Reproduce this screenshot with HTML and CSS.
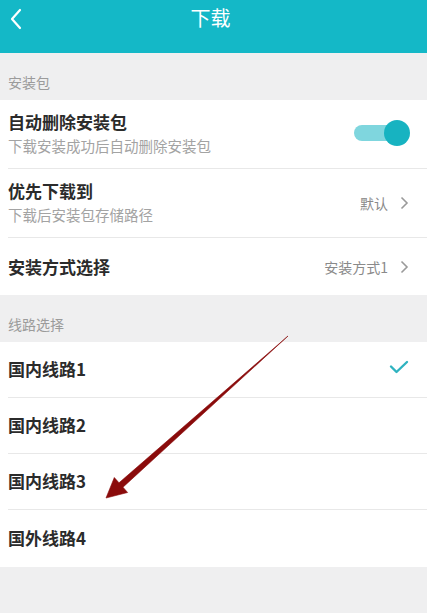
FILE: index.html
```html
<!DOCTYPE html>
<html lang="zh">
<head>
<meta charset="utf-8">
<link rel="stylesheet" href="styles.css">
</head>
<body>
<div class="page">
  <header class="topbar">
    <svg class="back" width="14" height="22" viewBox="0 0 14 22"><path d="M11 2 L3 11 L11 20" fill="none" stroke="#fff" stroke-width="2.2" stroke-linecap="round" stroke-linejoin="round"/></svg>
    <div class="title">下载</div>
  </header>

  <div class="section-label">安装包</div>
  <div class="group">
    <div class="row row-tall">
      <div class="texts">
        <div class="main">自动删除安装包</div>
        <div class="sub">下载安装成功后自动删除安装包</div>
      </div>
      <div class="toggle"><span class="track"></span><span class="knob"></span></div>
    </div>
    <div class="row row-tall">
      <div class="texts">
        <div class="main">优先下载到</div>
        <div class="sub">下载后安装包存储路径</div>
      </div>
      <div class="value">默认<svg class="chev" width="9" height="14" viewBox="0 0 9 14"><path d="M1.5 1.5 L7 7 L1.5 12.5" fill="none" stroke="#9a9a9a" stroke-width="1.6"/></svg></div>
    </div>
    <div class="row row-mid">
      <div class="texts"><div class="main">安装方式选择</div></div>
      <div class="value">安装方式1<svg class="chev" width="9" height="14" viewBox="0 0 9 14"><path d="M1.5 1.5 L7 7 L1.5 12.5" fill="none" stroke="#9a9a9a" stroke-width="1.6"/></svg></div>
    </div>
  </div>

  <div class="section-label">线路选择</div>
  <div class="group">
    <div class="row row-line">
      <div class="main">国内线路1</div>
      <svg class="check" width="20" height="14" viewBox="0 0 20 14"><path d="M2 6.5 L7.5 12 L18 2" fill="none" stroke="#2fb3c0" stroke-width="2.4" stroke-linecap="round" stroke-linejoin="round"/></svg>
    </div>
    <div class="row row-line"><div class="main">国内线路2</div></div>
    <div class="row row-line"><div class="main">国内线路3</div></div>
    <div class="row row-line"><div class="main">国外线路4</div></div>
  </div>

  <svg class="arrow" width="427" height="613" viewBox="0 0 427 613">
    <polygon points="288,336 123,487.2 127.6,492.5 106,498 114.3,477.5 119,482.8" fill="#8a0b0b" stroke="#8a0b0b" stroke-width="0.6" stroke-linejoin="round"/>
  </svg>
</div>
</body>
</html>
```
FILE: styles.css
```css
* { box-sizing: border-box; }
html, body { margin: 0; padding: 0; }
body {
  background: #efeff0;
  font-family: "Noto Sans CJK SC", "Noto Sans", sans-serif;
  width: 427px;
  height: 613px;
  overflow: hidden;
}
.page { position: relative; width: 427px; height: 613px; }
.topbar {
  height: 53px;
  background: #14b8c7;
  display: flex;
  align-items: flex-start;
  justify-content: center;
  position: relative;
}
.back { position: absolute; left: 9px; top: 8px; }
.title {
  color: #fff;
  font-size: 20px;
  line-height: 20px;
  margin-top: 8px;
  margin-right: 6px;
}
.section-label {
  height: 47px;
  padding: 19px 8px 0;
  color: #9b9b9b;
  font-size: 14px;
  line-height: 20px;
}
.group { background: #fff; }
.row {
  display: flex;
  align-items: center;
  justify-content: space-between;
  margin-left: 8px;
  padding-right: 19px;
  border-bottom: 1px solid #e8e8e8;
}
.row:last-child { border-bottom: none; }
.row-tall { height: 69px; }
.row-tall .texts { margin-top: -2px; }
.row-mid { height: 57px; }
.row-line { height: 56px; }
.row-line:last-child { height: 57px; }
.row-line .main { margin-top: -1px; }
.main {
  color: #2b2b2b;
  font-size: 17px;
  font-weight: 700;
  line-height: 22px;
}
.sub {
  color: #a3a3a3;
  font-size: 14.5px;
  line-height: 18px;
  margin-top: 4px;
}
.value {
  display: flex;
  align-items: center;
  gap: 12px;
  color: #8a8a8a;
  font-size: 14px;
  margin-right: -1px;
}
.toggle {
  position: relative;
  width: 56px;
  height: 26px;
  margin-top: -3px;
  margin-right: -2px;
}
.track {
  position: absolute;
  left: 0;
  top: 5px;
  width: 44px;
  height: 16px;
  border-radius: 8px;
  background: #7fd6de;
}
.knob {
  position: absolute;
  right: 0;
  top: 0;
  width: 26px;
  height: 26px;
  border-radius: 50%;
  background: #17b3c1;
}
.check { margin-right: -1px; margin-top: -5px; }
.arrow { position: absolute; left: 0; top: 0; pointer-events: none; }
```
